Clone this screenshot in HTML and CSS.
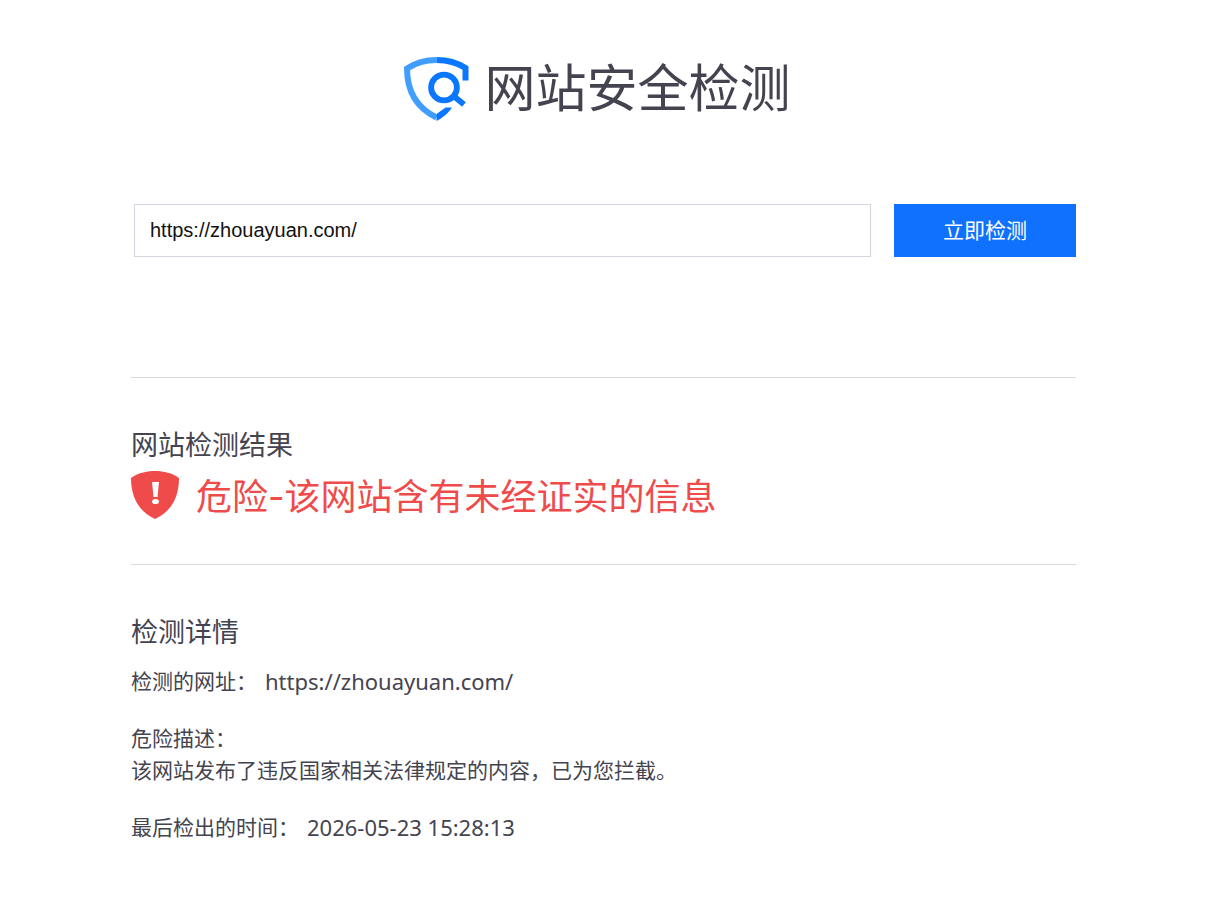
FILE: index.html
```
<!DOCTYPE html>
<html lang="zh-CN">
<head>
    <meta charset="UTF-8">
    <meta name="viewport" content="width=device-width, initial-scale=1.0">
    <title>网站安全检测</title>
    <link rel="stylesheet" href="styles.css">
</head>
<body>
    <div class="container">
        <header class="header">
            <svg class="logo" viewBox="0 0 65 65" aria-hidden="true">
                <path d="M32.500 3C22 3 12 5.500 3 11.500C3 34 12 50.500 32.500 60.500" fill="none" stroke="#409eff" stroke-width="6"/>
                <path d="M32.500 3C43 3 53 5.500 61.500 11V23.500" fill="none" stroke="#0b76ff" stroke-width="6"/>
                <path d="M32.500 57L41.500 50.500H48C44.500 56 38.500 61 32.500 64Z" fill="#0b76ff"/>
                <circle cx="40" cy="30.500" r="12.900" fill="none" stroke="#0b76ff" stroke-width="5.800"/>
                <path d="M49 38.500L60 47.500" fill="none" stroke="#0b76ff" stroke-width="5.800"/>
            </svg>
            <h1 class="title">网站安全检测</h1>
        </header>

        <form class="search">
            <input class="search-input" type="text" name="url" value="https://zhouayuan.com/" aria-label="网址">
            <button class="search-btn" type="button">立即检测</button>
        </form>

        <section class="result">
            <h2 class="subtitle">网站检测结果</h2>
            <div class="status">
                <svg class="status-icon" viewBox="0 0 48 48" aria-hidden="true">
                    <path d="M24 0C33 0 41 2 48 7C48 28 39 41 24 48C9 41 0 28 0 7C7 2 15 0 24 0Z" fill="#ef4b4b"/>
                    <path d="M21 11H28L26.500 26H22.500Z" fill="#fff"/>
                    <ellipse cx="24.500" cy="30.500" rx="3.400" ry="2.600" fill="#fff"/>
                </svg>
                <p class="status-text">危险-该网站含有未经证实的信息</p>
            </div>
        </section>

        <section class="detail">
            <h2 class="subtitle">检测详情</h2>
            <p class="item"><span>检测的网址：</span><span class="value">https://zhouayuan.com/</span></p>
            <p class="item-label">危险描述：</p>
            <p class="item">该网站发布了违反国家相关法律规定的内容，已为您拦截。</p>
            <p class="item"><span>最后检出的时间：</span><span class="value">2026-05-23 15:28:13</span></p>
        </section>
    </div>
</body>
</html>
```

FILE: styles.css
```
* {
    box-sizing: border-box;
}

body {
    margin: 0;
    padding: 0 22px 0 8px;
    font-family: "Noto Sans", "Noto Sans CJK SC", sans-serif;
    background: #fff;
    color: #444450;
}

h1, h2, p {
    margin: 0;
    font-weight: 400;
}

.container {
    max-width: 945px;
    margin: 0 auto;
}

/* Logo y título */
.header {
    display: flex;
    justify-content: center;
    align-items: flex-start;
    gap: 15px;
    padding: 57px 12px 82px 0;
}

.logo {
    width: 65px;
    height: 65px;
}

.title {
    font-size: 51px;
    line-height: 60px;
}

/* Buscador */
.search {
    display: flex;
    gap: 23px;
    padding: 0 0 120px 3px;
    border-bottom: 1px solid #d9d9dc;
}

.search-input {
    flex: 1;
    min-width: 0;
    height: 53px;
    padding: 0 15px;
    border: 1px solid #d7d6e0;
    border-radius: 0;
    font-family: "Liberation Sans", Arial, sans-serif;
    font-size: 20px;
    color: #111;
    outline: none;
}

.search-btn {
    width: 182px;
    height: 53px;
    padding: 0 0 3px;
    border: 0;
    background: #1171ff;
    color: #fff;
    font-family: inherit;
    font-size: 21px;
    cursor: pointer;
}

/* Resultado */
.result {
    padding: 48px 0 41px;
    border-bottom: 1px solid #d9d9dc;
}

.subtitle {
    font-size: 27px;
    line-height: 38px;
}

.status {
    display: flex;
    align-items: flex-start;
    gap: 17px;
    margin-top: 7px;
}

.status-icon {
    flex: none;
    width: 48px;
    height: 48px;
}

.status-text {
    font-family: Inter, "Noto Sans CJK SC", sans-serif;
    font-size: 36px;
    line-height: 52px;
    color: #ef4b4b;
}

/* Detalle */
.detail {
    padding: 48px 0;
}

.detail .subtitle {
    margin-bottom: 14px;
}

.item,
.item-label {
    font-size: 21px;
    line-height: 32px;
}

.item {
    display: flex;
    gap: 8px;
    margin-bottom: 25px;
}

.value {
    font-size: 22px;
}
```
